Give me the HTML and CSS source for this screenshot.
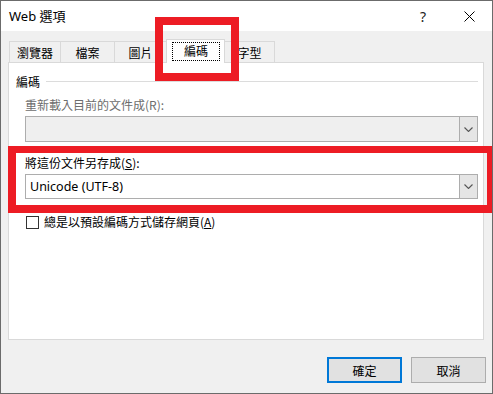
FILE: index.html
```html
<!DOCTYPE html>
<html lang="zh-Hant">
<head>
    <meta charset="UTF-8">
    <title>Web 選項</title>
    <link rel="stylesheet" href="styles.css">
</head>
<body>
    <div class="window">
        <div class="titlebar">
            <span class="title">Web 選項</span>
            <span class="title-btn">?</span>
            <span class="title-btn">
                <svg width="11" height="11" viewBox="0 0 11 11"><path d="M0.5 0.5 L10.5 10.5 M10.5 0.5 L0.5 10.5" stroke="#000" stroke-width="1" fill="none"/></svg>
            </span>
        </div>

        <div class="content">
            <div class="tabs">
                <div class="tab tab-1">瀏覽器</div>
                <div class="tab tab-2">檔案</div>
                <div class="tab tab-3">圖片</div>
                <div class="tab active"><span class="focus">編碼</span></div>
                <div class="tab tab-5">字型</div>
            </div>

            <div class="panel">
                <div class="group-head">
                    <span>編碼</span>
                    <div class="group-line"></div>
                </div>

                <div class="field-label disabled">重新載入目前的文件成(R):</div>
                <div class="combo combo-disabled">
                    <span class="combo-text"></span>
                    <span class="combo-btn">
                        <svg width="9" height="5" viewBox="0 0 9 5"><path d="M0.5 0.5 L4.5 4.5 L8.5 0.5" stroke="#555" stroke-width="1.1" fill="none"/></svg>
                    </span>
                </div>

                <div class="field-label save-label">將這份文件另存成(<u>S</u>):</div>
                <div class="combo">
                    <span class="combo-text">Unicode (UTF-8)</span>
                    <span class="combo-btn">
                        <svg width="9" height="5" viewBox="0 0 9 5"><path d="M0.5 0.5 L4.5 4.5 L8.5 0.5" stroke="#555" stroke-width="1.1" fill="none"/></svg>
                    </span>
                </div>

                <div class="check-row">
                    <span class="checkbox"></span>
                    <span>總是以預設編碼方式儲存網頁(<u>A</u>)</span>
                </div>
            </div>
        </div>

        <div class="footer">
            <div class="btn btn-default">確定</div>
            <div class="btn">取消</div>
        </div>

        <div class="mark mark-tab"></div>
        <div class="mark mark-save"></div>
    </div>
</body>
</html>
```

FILE: styles.css
```css
body {
    margin: 0;
    font-family: "Noto Sans", "Noto Sans CJK TC", sans-serif;
    font-size: 12px;
    color: #000;
    background: #fff;
}

.window {
    position: relative;
    width: 493px;
    height: 394px;
    box-sizing: border-box;
    border: 1px solid #6b6b6b;
    background-color: #f0f0f0;
    display: flex;
    flex-direction: column;
    overflow: hidden;
}

.titlebar {
    height: 30px;
    flex: none;
    background-color: #fff;
    display: flex;
    align-items: center;
}

.title {
    flex: 1;
    padding-left: 8px;
    font-size: 13px;
    padding-bottom: 1px;
}

.title-btn {
    width: 46px;
    height: 30px;
    display: flex;
    align-items: center;
    justify-content: center;
    font-size: 14px;
    color: #222;
}

.content {
    flex: 1;
    display: flex;
    flex-direction: column;
    padding: 8px 8px 0 7px;
}

.tabs {
    height: 23px;
    flex: none;
    display: flex;
    align-items: flex-end;
    padding-left: 1px;
}

.tab {
    height: 21px;
    box-sizing: border-box;
    border: 1px solid #d9d9d9;
    border-bottom: none;
    margin-left: -1px;
    display: flex;
    align-items: center;
    justify-content: center;
    font-family: "Noto Sans CJK TC", sans-serif;
    font-size: 12px;
    padding-top: 1px;
}

.tab-1 { width: 52px; margin-left: 0; }
.tab-2 { width: 55px; }
.tab-3 { width: 53px; }
.tab-5 { width: 51px; }

.tab.active {
    position: relative;
    z-index: 1;
    width: 59px;
    height: 24px;
    margin-bottom: -1px;
    background-color: #fff;
    padding: 2px 4px 1px 5px;
    align-items: flex-start;
}

.focus {
    display: block;
    width: 48px;
    height: 19px;
    box-sizing: border-box;
    border: 1px dotted #000;
    text-align: center;
    line-height: 16px;
}

.panel {
    flex: 1;
    background-color: #fff;
    border: 1px solid #d9d9d9;
    padding: 10px 5px 0 16px;
    font-family: "Noto Sans CJK TC", sans-serif;
}

.group-head {
    display: flex;
    align-items: center;
    height: 16px;
    margin-left: -9px;
}

.group-line {
    flex: 1;
    height: 1px;
    background-color: #dcdcdc;
    margin-left: 6px;
}

.field-label {
    line-height: 16px;
    margin-top: 8px;
}

.field-label.disabled {
    color: #6d6d6d;
}

.save-label {
    margin-top: 13px;
}

.combo {
    display: flex;
    height: 25px;
    margin-top: 3px;
    box-sizing: border-box;
    border: 1px solid #adadad;
    background-color: #fff;
}

.combo-disabled {
    background-color: #efefef;
    height: 26px;
}

.combo-text {
    flex: 1;
    padding-left: 4px;
    display: flex;
    align-items: center;
    font-family: "Noto Sans", "Noto Sans CJK TC", sans-serif;
    font-size: 12.5px;
}

.combo-btn {
    width: 17px;
    border-left: 1px solid #adadad;
    background-color: #e5e5e5;
    display: flex;
    align-items: center;
    justify-content: center;
}

.check-row {
    display: flex;
    align-items: center;
    gap: 5px;
    margin-top: 15px;
    margin-left: 1px;
    line-height: 16px;
}

.checkbox {
    width: 13px;
    height: 13px;
    box-sizing: border-box;
    border: 1px solid #333;
    background-color: #fff;
}

.footer {
    height: 53px;
    flex: none;
    display: flex;
    justify-content: flex-end;
    gap: 9px;
    padding: 17px 6px 0 0;
    box-sizing: border-box;
    font-family: "Noto Sans CJK TC", sans-serif;
}

.btn {
    width: 75px;
    height: 26px;
    box-sizing: border-box;
    border: 1px solid #adadad;
    background-color: #e1e1e1;
    display: flex;
    align-items: center;
    justify-content: center;
}

.btn-default {
    border: 2px solid #0078d7;
}

/* red annotation boxes drawn over the dialog */
.mark {
    position: absolute;
    border: 8px solid #ed1c24;
    box-sizing: border-box;
    z-index: 5;
}

.mark-tab {
    left: 154px;
    top: 16px;
    width: 84px;
    height: 64px;
}

.mark-save {
    left: 7px;
    top: 145px;
    width: 486px;
    height: 67px;
    border-right-width: 7px;
    border-top-width: 7px;
}
```
